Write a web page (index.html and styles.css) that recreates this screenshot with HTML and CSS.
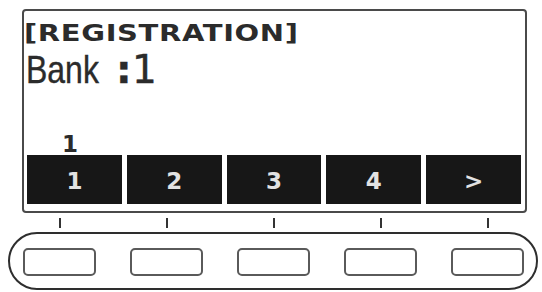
FILE: index.html
```html
<!DOCTYPE html>
<html>
<head>
<meta charset="utf-8">
<link rel="stylesheet" href="styles.css">
</head>
<body>
<div class="device">
  <div class="screen">
    <div class="title"><span class="title-text">[REGISTRATION]</span></div>
    <div class="bank"><span class="bank-word">Bank</span><span class="colon">:</span><span class="bank-num">1</span></div>
    <div class="spacer"></div>
    <div class="page-num">1</div>
    <div class="softkeys">
      <div class="cell">1</div>
      <div class="cell">2</div>
      <div class="cell">3</div>
      <div class="cell">4</div>
      <div class="cell">&gt;</div>
    </div>
  </div>
  <div class="ticks">
    <div class="tick-slot"><span class="tick"></span></div>
    <div class="tick-slot"><span class="tick"></span></div>
    <div class="tick-slot"><span class="tick"></span></div>
    <div class="tick-slot"><span class="tick"></span></div>
    <div class="tick-slot"><span class="tick"></span></div>
  </div>
  <div class="panel">
    <div class="button"></div>
    <div class="button"></div>
    <div class="button"></div>
    <div class="button"></div>
    <div class="button"></div>
  </div>
</div>
</body>
</html>
```
FILE: styles.css
```css
html, body {
  margin: 0;
  padding: 0;
  background: #ffffff;
}
.device {
  width: 542px;
  height: 292px;
  padding-top: 9px;
  box-sizing: border-box;
}
.screen {
  margin-left: 22px;
  width: 505px;
  height: 204px;
  box-sizing: border-box;
  border: 2px solid #4a4a4a;
  border-radius: 4px;
  padding: 0 4px 7px 3px;
  display: flex;
  flex-direction: column;
  color: #2b2b2b;
}
.title {
  margin-top: 11px;
  height: 22px;
  font-family: "DejaVu Sans", sans-serif;
  font-weight: 700;
  font-size: 23px;
  line-height: 22px;
  white-space: nowrap;
}
.title-text {
  display: inline-block;
  letter-spacing: 0.5px;
  transform: scaleX(1.26);
  transform-origin: left center;
  margin-left: -3px;
}
.bank {
  margin-top: 6px;
  display: flex;
  align-items: baseline;
  font-family: "Liberation Sans", sans-serif;
  font-size: 39px;
  line-height: 39px;
  white-space: nowrap;
  -webkit-text-stroke: 0.4px #2b2b2b;
}
.bank-word {
  display: inline-block;
  width: 73px;
  transform: scaleX(0.82);
  transform-origin: left center;
  margin-left: -1px;
}
.colon {
  font-family: "DejaVu Sans", sans-serif;
  font-weight: 700;
  margin-left: 17px;
  width: 16px;
}
.bank-num {
  font-family: "DejaVu Sans", sans-serif;
}
.spacer {
  flex: 1;
}
.page-num {
  font-family: "DejaVu Sans", sans-serif;
  font-weight: 700;
  font-size: 23px;
  line-height: 20px;
  width: 86px;
  text-align: center;
  margin-bottom: 1px;
}
.softkeys {
  display: grid;
  grid-template-columns: repeat(5, 1fr);
  column-gap: 5px;
  height: 49px;
}
.cell {
  background: #171717;
  color: #e2e2e2;
  font-family: "DejaVu Sans", sans-serif;
  font-weight: 700;
  font-size: 23px;
  display: flex;
  align-items: center;
  justify-content: center;
  padding-top: 3px;
  box-sizing: border-box;
}
.ticks {
  margin-top: 5px;
  margin-left: 23px;
  display: grid;
  grid-template-columns: repeat(5, 73px);
  column-gap: 34px;
  height: 10px;
}
.tick-slot {
  display: flex;
  justify-content: center;
}
.tick {
  width: 2px;
  height: 10px;
  background: #333333;
}
.panel {
  margin-top: 4px;
  margin-left: 8px;
  width: 530px;
  height: 58px;
  box-sizing: border-box;
  border: 2px solid #2e2e2e;
  border-radius: 29px;
  padding: 0 12px 0 13px;
  display: flex;
  align-items: center;
  gap: 34px;
}
.button {
  width: 73px;
  height: 28px;
  box-sizing: border-box;
  border: 2px solid #5a5a5a;
  border-radius: 5px;
  margin-top: 2px;
}
```
